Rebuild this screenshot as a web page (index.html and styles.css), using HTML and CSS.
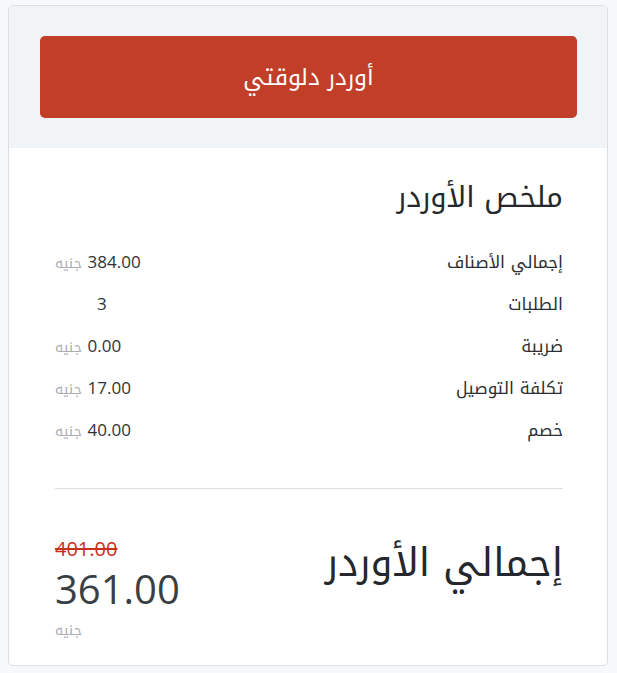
FILE: index.html
```html
<!DOCTYPE html>
<html lang="ar" dir="rtl">
<head>
<meta charset="utf-8">
<link rel="stylesheet" href="styles.css">
</head>
<body>
<div class="card">
  <div class="card-top">
    <button class="order-btn">أوردر دلوقتي</button>
  </div>
  <div class="card-body">
    <h2 class="title">ملخص الأوردر</h2>
    <div class="rows">
      <div class="row"><span class="label">إجمالي الأصناف</span><span class="value"><span class="num">384.00</span> <span class="cur">جنيه</span></span></div>
      <div class="row"><span class="label">الطلبات</span><span class="value count"><span class="num">3</span></span></div>
      <div class="row"><span class="label">ضريبة</span><span class="value"><span class="num">0.00</span> <span class="cur">جنيه</span></span></div>
      <div class="row"><span class="label">تكلفة التوصيل</span><span class="value"><span class="num">17.00</span> <span class="cur">جنيه</span></span></div>
      <div class="row"><span class="label">خصم</span><span class="value"><span class="num">40.00</span> <span class="cur">جنيه</span></span></div>
    </div>
    <hr class="divider">
    <div class="total">
      <div class="total-label">إجمالي الأوردر</div>
      <div class="total-value">
        <div class="old">401.00</div>
        <div class="new">361.00</div>
        <div class="cur">جنيه</div>
      </div>
    </div>
  </div>
</div>
</body>
</html>
```
FILE: styles.css
```css
html, body {
  background: #f6f8fa;
}
body {
  margin: 5px 9px 0 8px;
  font-family: "Noto Kufi Arabic", "Noto Sans Arabic", "DejaVu Sans", sans-serif;
  color: #2b2f33;
}
.card {
  width: 598px;
  border: 1px solid #dcdfe3;
  border-radius: 5px;
  background: #fff;
  overflow: hidden;
}
.card-top {
  background: #f1f4f7;
  padding: 30px 30px 30px 31px;
}
.order-btn {
  display: block;
  width: 100%;
  height: 82px;
  border: none;
  border-radius: 5px;
  background: #c13e28;
  color: #fff;
  font-family: inherit;
  font-size: 23px;
  cursor: pointer;
}
.card-body {
  padding: 30px 44px 22px 46px;
}
.title {
  margin: 0 0 30px;
  font-size: 29px;
  font-weight: 400;
  line-height: 40px;
  color: #24282c;
}
.rows {
  display: flex;
  flex-direction: column;
  gap: 14px;
}
.row {
  display: flex;
  justify-content: space-between;
  align-items: center;
  height: 28px;
}
.label {
  font-size: 17px;
  color: #2b2f33;
}
.value {
  direction: rtl;
  font-size: 17px;
}
.value.count {
  padding-left: 42px;
}
.num {
  font-family: "Open Sans", "Liberation Sans", sans-serif;
  color: #2f3337;
}
.cur {
  font-size: 14px;
  color: #a9adb1;
}
.divider {
  border: none;
  border-top: 1px solid #dcdfe3;
  margin: 44px 0 0;
}
.total {
  display: flex;
  justify-content: space-between;
  align-items: flex-start;
  padding-top: 48px;
}
.total-label {
  font-size: 39px;
  line-height: 50px;
  margin-top: 1px;
  color: #24282c;
}
.total-value {
  display: flex;
  flex-direction: column;
  align-items: flex-end;
  direction: ltr;
}
.total-value .old {
  align-self: flex-start;
  font-family: "Open Sans", "Liberation Sans", sans-serif;
  font-size: 20px;
  line-height: 24px;
  color: #c8301c;
  text-decoration: line-through;
}
.total-value .new {
  font-family: "Open Sans", "Liberation Sans", sans-serif;
  font-size: 40px;
  line-height: 52px;
  margin-top: 2px;
  color: #3a3f44;
}
.total-value .cur {
  align-self: flex-start;
  font-size: 14px;
  line-height: 24px;
  margin-top: 4px;
}
```
